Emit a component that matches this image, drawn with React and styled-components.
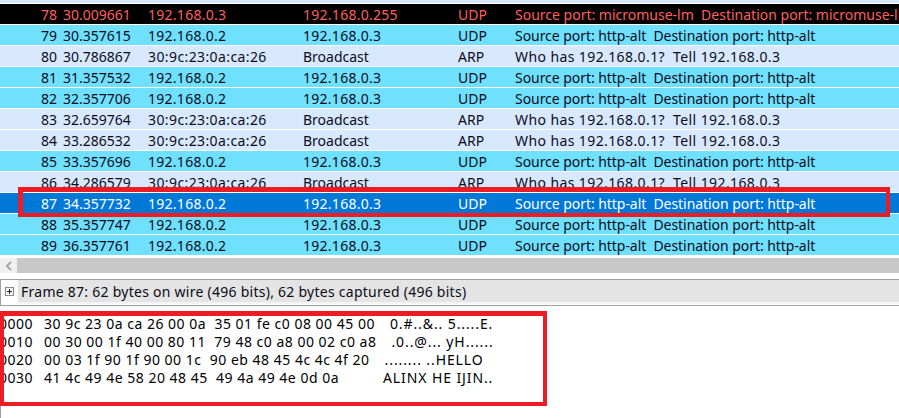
import React from "react";
import styled, { createGlobalStyle } from "styled-components";

const packets = [
  [78, "30.009661", "192.168.0.3", "192.168.0.255", "UDP", "Source port: micromuse-lm  Destination port: micromuse-lm", "bad"],
  [79, "30.357615", "192.168.0.2", "192.168.0.3", "UDP", "Source port: http-alt  Destination port: http-alt", "udp"],
  [80, "30.786867", "30:9c:23:0a:ca:26", "Broadcast", "ARP", "Who has 192.168.0.1?  Tell 192.168.0.3", "arp"],
  [81, "31.357532", "192.168.0.2", "192.168.0.3", "UDP", "Source port: http-alt  Destination port: http-alt", "udp"],
  [82, "32.357706", "192.168.0.2", "192.168.0.3", "UDP", "Source port: http-alt  Destination port: http-alt", "udp"],
  [83, "32.659764", "30:9c:23:0a:ca:26", "Broadcast", "ARP", "Who has 192.168.0.1?  Tell 192.168.0.3", "arp"],
  [84, "33.286532", "30:9c:23:0a:ca:26", "Broadcast", "ARP", "Who has 192.168.0.1?  Tell 192.168.0.3", "arp"],
  [85, "33.357696", "192.168.0.2", "192.168.0.3", "UDP", "Source port: http-alt  Destination port: http-alt", "udp"],
  [86, "34.286579", "30:9c:23:0a:ca:26", "Broadcast", "ARP", "Who has 192.168.0.1?  Tell 192.168.0.3", "arp"],
  [87, "34.357732", "192.168.0.2", "192.168.0.3", "UDP", "Source port: http-alt  Destination port: http-alt", "selected"],
  [88, "35.357747", "192.168.0.2", "192.168.0.3", "UDP", "Source port: http-alt  Destination port: http-alt", "udp"],
  [89, "36.357761", "192.168.0.2", "192.168.0.3", "UDP", "Source port: http-alt  Destination port: http-alt", "udp"],
];

const hexLines = [
  ["0000", "30 9c 23 0a ca 26 00 0a  35 01 fe c0 08 00 45 00", "0.#..&.. 5.....E."],
  ["0010", "00 30 00 1f 40 00 80 11  79 48 c0 a8 00 02 c0 a8", ".0..@... yH......"],
  ["0020", "00 03 1f 90 1f 90 00 1c  90 eb 48 45 4c 4c 4f 20", "........ ..HELLO "],
  ["0030", "41 4c 49 4e 58 20 48 45  49 4a 49 4e 0d 0a       ", "ALINX HE IJIN.."],
];

const rowColours = {
  bad: { bg: "#000000", fg: "#ff5f5f" },
  udp: { bg: "#70e0ff", fg: "#0c0c18" },
  arp: { bg: "#d8e8ff", fg: "#0c0c18" },
  selected: { bg: "#0078d7", fg: "#ffffff" },
};

// the reference font has wider digits than Noto Sans
const addressTrack = (value) => {
  if (value.includes(":")) return 0.4;
  if (/^\d/.test(value)) return 0.27;
  return 0;
};

const infoTrack = { bad: 0, udp: -0.05, arp: 0.4, selected: -0.05 };

const GlobalStyle = createGlobalStyle`
  html, body {
    margin: 0;
    padding: 0;
    background: #ffffff;
  }
  body {
    font-family: "Noto Sans", "Liberation Sans", sans-serif;
    font-size: 14px;
  }
`;

const Page = styled.div`
  position: relative;
  width: 899px;
  height: 418px;
  overflow: hidden;
  background: #ffffff;
`;

const PacketList = styled.div`
  display: flex;
  flex-direction: column;
  gap: 1px;
  padding-bottom: 3px;
  &::before {
    content: "";
    height: 3px;
    background: #d8e8ff;
  }
`;

const Row = styled.div`
  display: grid;
  grid-template-columns: 57px 91px 155px 155px 57px 1fr;
  height: 20px;
  line-height: 21px;
  white-space: pre;
  overflow: hidden;
  background: ${(p) => rowColours[p.$kind].bg};
  color: ${(p) => rowColours[p.$kind].fg};
`;

const No = styled.span`
  text-align: right;
`;

const Cell = styled.span`
  padding-left: ${(p) => (p.$first ? 6 : 0)}px;
  letter-spacing: ${(p) => p.$track || 0}px;
`;

const HScroll = styled.div`
  display: flex;
  height: 15px;
  background: #c8c8c8;
`;

const ScrollArrow = styled.div`
  display: flex;
  align-items: center;
  justify-content: center;
  width: 17px;
  background: #f0f0f0;
`;

const DetailPane = styled.div`
  display: flex;
  margin-top: 6px;
  height: 24px;
  padding-bottom: 1px;
  border-top: 1px solid #a0a0a0;
  border-bottom: 1px solid #a0a0a0;
  border-left: 1px solid #a0a0a0;
`;

const Expander = styled.div`
  display: flex;
  align-items: center;
  justify-content: center;
  width: 17px;
  height: 22px;
`;

const DetailText = styled.div`
  flex: 1;
  height: 22px;
  line-height: 23px;
  padding-left: 3px;
  background: #e4e4e4;
  border-bottom: 2px solid #f4f4f4;
  color: #0c0c18;
  letter-spacing: 0.26px;
  white-space: pre;
`;

const HexPane = styled.div`
  margin-top: 5px;
  padding-top: 4px;
  border-left: 1px solid #a0a0a0;
  height: 105px;
`;

const HexLine = styled.div`
  height: 18px;
  line-height: 18px;
  margin-left: -2px;
  color: #000000;
  white-space: pre;
  letter-spacing: 0.5px;
`;

const HexBytes = styled.span`
  margin: 0 15px 0 11px;
`;

const HexAscii = styled.span`
  letter-spacing: 0.9px;
`;

const Callout = styled.div`
  position: absolute;
  box-sizing: border-box;
  border-style: solid;
  border-color: #ed1c24;
  border-width: ${(p) => p.$edges};
  left: ${(p) => p.$x}px;
  top: ${(p) => p.$y}px;
  width: ${(p) => p.$w}px;
  height: ${(p) => p.$h}px;
`;

const App = () => {
  return (
    <Page>
      <GlobalStyle />
      <PacketList>
        {packets.map(([no, time, src, dst, proto, info, kind]) => (
          <Row key={no} $kind={kind}>
            <No>{no}</No>
            <Cell $first>{time}</Cell>
            <Cell $track={addressTrack(src)}>{src}</Cell>
            <Cell $track={addressTrack(dst)}>{dst}</Cell>
            <Cell>{proto}</Cell>
            <Cell $track={infoTrack[kind]}>{info}</Cell>
          </Row>
        ))}
      </PacketList>
      <HScroll>
        <ScrollArrow>
          <svg width="8" height="10" viewBox="0 0 8 10">
            <path d="M6 1 L2 5 L6 9" fill="none" stroke="#a6a6a6" strokeWidth="2" />
          </svg>
        </ScrollArrow>
      </HScroll>
      <DetailPane>
        <Expander>
          <svg width="9" height="9" viewBox="0 0 9 9">
            <rect x="0.5" y="0.5" width="8" height="8" fill="#f4f4f4" stroke="#8a8a8a" />
            <path d="M2 4.5 H7 M4.5 2 V7" stroke="#222222" />
          </svg>
        </Expander>
        <DetailText>Frame 87: 62 bytes on wire (496 bits), 62 bytes captured (496 bits)</DetailText>
      </DetailPane>
      <HexPane>
        {hexLines.map(([offset, bytes, ascii]) => (
          <HexLine key={offset}>
            {offset}
            <HexBytes>{bytes}</HexBytes>
            <HexAscii>{ascii}</HexAscii>
          </HexLine>
        ))}
      </HexPane>
      <Callout $x={18} $y={187} $w={872} $h={30} $edges="5px 4px 4px 5px" />
      <Callout $x={0} $y={311} $w={547} $h={95} $edges="5px 4px 4px 4px" />
    </Page>
  );
};

export default App;
